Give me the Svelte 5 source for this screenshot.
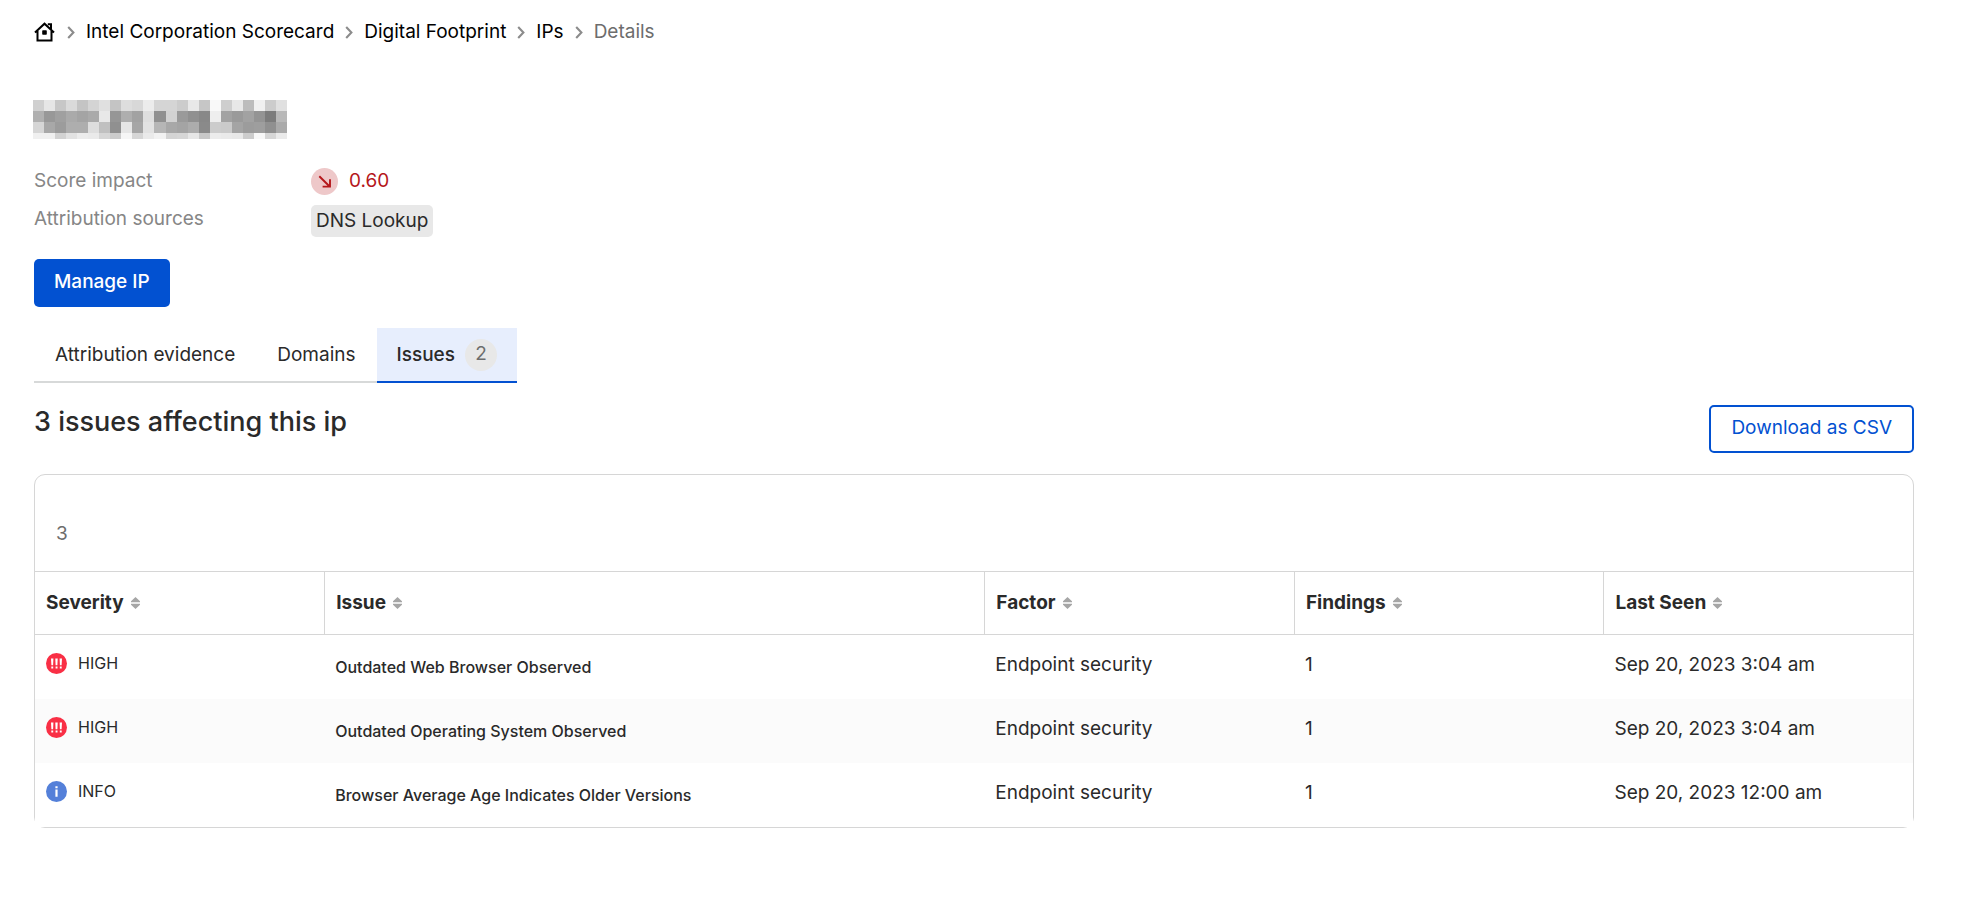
<script>
  const crumbs = ['Intel Corporation Scorecard', 'Digital Footprint', 'IPs'];

  // Grey levels of the redacted address, one row of blocks per line
  const mosaic = [
    [208, 230, 199, 218, 196, 212, 224, 196, 221, 216, 236, 213, 213, 204, 232, 198, 249, 206, 232, 188, 240, 204, 224],
    [176, 152, 160, 170, 164, 170, 232, 150, 174, 162, 222, 144, 210, 154, 144, 136, 238, 162, 154, 162, 148, 124, 184],
    [214, 168, 156, 174, 174, 222, 192, 144, 230, 166, 226, 182, 168, 164, 172, 138, 204, 202, 164, 156, 158, 144, 170],
    [240, 240, 210, 226, 236, 234, 214, 204, 246, 214, 234, 242, 212, 214, 230, 200, 236, 234, 232, 204, 248, 214, 234]
  ];

  const columns = [
    { key: 'severity', label: 'Severity' },
    { key: 'issue', label: 'Issue' },
    { key: 'factor', label: 'Factor' },
    { key: 'findings', label: 'Findings' },
    { key: 'seen', label: 'Last Seen' }
  ];

  const rows = [
    { severity: 'HIGH', issue: 'Outdated Web Browser Observed', factor: 'Endpoint security', findings: 1, seen: 'Sep 20, 2023 3:04 am' },
    { severity: 'HIGH', issue: 'Outdated Operating System Observed', factor: 'Endpoint security', findings: 1, seen: 'Sep 20, 2023 3:04 am' },
    { severity: 'INFO', issue: 'Browser Average Age Indicates Older Versions', factor: 'Endpoint security', findings: 1, seen: 'Sep 20, 2023 12:00 am' }
  ];
</script>

{#snippet chevron()}
  <svg class="chevron" viewBox="0 0 8 13" width="8" height="13" aria-hidden="true">
    <path d="M1.2 1 6.4 6.5 1.2 12" fill="none" stroke="#8c8c8c" stroke-width="2.1" />
  </svg>
{/snippet}

<main>
  <nav class="crumbs" aria-label="Breadcrumb">
    <a href="#home" aria-label="Home">
      <svg class="home" viewBox="0 0 22 20" width="22" height="20" aria-hidden="true">
        <path d="M1 10.6 10.5 1.7l9.5 8.9M3.5 9V18.6H17.5V9M13.8 2.2H17V7.4" fill="none" stroke="#000" stroke-width="2" />
        <rect x="8.2" y="8.2" width="4.6" height="4.6" rx="0.8" />
      </svg>
    </a>
    {#each crumbs as crumb}
      {@render chevron()}
      <a href="#crumb">{crumb}</a>
    {/each}
    {@render chevron()}
    <span class="current">Details</span>
  </nav>

  <svg class="mosaic" viewBox="0 0 23 39" width="254" height="39" preserveAspectRatio="none" shape-rendering="crispEdges" aria-hidden="true">
    {#each mosaic as line, y}
      {#each line as level, x}
        <rect {x} y={y * 11} width="1" height={y === 3 ? 6 : 11} fill="rgb({level},{level},{level})" />
      {/each}
    {/each}
  </svg>

  <dl class="facts">
    <dt>Score impact</dt>
    <dd class="impact">
      <svg viewBox="0 0 27 27" width="27" height="27" aria-hidden="true">
        <circle cx="13.5" cy="13.5" r="13.5" fill="#eec8c9" />
        <path d="M8.3 8.2 18.4 18.2M19 11.2V18.6H11.6" fill="none" stroke="#b5171b" stroke-width="1.9" />
      </svg>
      0.60
    </dd>
    <dt>Attribution sources</dt>
    <dd><span class="tag">DNS Lookup</span></dd>
  </dl>

  <button class="button primary" type="button">Manage IP</button>

  <div class="tabs" role="tablist">
    <button type="button" role="tab" aria-selected="false">Attribution evidence</button>
    <button type="button" role="tab" aria-selected="false">Domains</button>
    <button type="button" role="tab" aria-selected="true" class="active">Issues <span class="count">2</span></button>
  </div>

  <div class="heading">
    <h2>3 issues affecting this ip</h2>
    <button class="button outline" type="button">Download as CSV</button>
  </div>

  <section class="card">
    <div class="total">3</div>
    <table>
      <colgroup>
        {#each columns as column}<col class={column.key} />{/each}
      </colgroup>
      <thead>
        <tr>
          {#each columns as column}
            <th scope="col">
              <button type="button">
                {column.label}
                <svg viewBox="0 0 9 12" width="9" height="12" aria-hidden="true">
                  <path d="M4.5 0 9 4.2V5.2H0V4.2zM0 6.8H9V7.8L4.5 12 0 7.8z" fill="#a6a6a6" />
                </svg>
              </button>
            </th>
          {/each}
        </tr>
      </thead>
      <tbody>
        {#each rows as row}
          <tr>
            <td>
              <span class="level">
                <svg viewBox="0 0 21 21" width="21" height="21" aria-hidden="true">
                  {#if row.severity === 'HIGH'}
                    <circle cx="10.5" cy="10.5" r="10.5" fill="#f92f45" />
                    <path d="M5 5.6H7.4L7.1 12.2H5.4zM9.3 5.6H11.7L11.4 12.2H9.6zM13.6 5.6H16L15.6 12.2H13.9zM5.3 13.4H7.2V15.4H5.3zM9.6 13.4H11.5V15.4H9.6zM13.8 13.4H15.7V15.4H13.8z" fill="#fff" />
                  {:else}
                    <circle cx="10.5" cy="10.5" r="10.5" fill="#5480d9" />
                    <path d="M9.4 5.2H11.6V7.2H9.4zM9.4 8.6H11.6V15.8H9.4z" fill="#fff" />
                  {/if}
                </svg>
                {row.severity}
              </span>
            </td>
            <td><span class="issue-name">{row.issue}</span></td>
            <td>{row.factor}</td>
            <td>{row.findings}</td>
            <td>{row.seen}</td>
          </tr>
        {/each}
      </tbody>
    </table>
  </section>
</main>

<style>
  :global(body) {
    margin: 0;
    background: #fff;
  }
  main {
    padding: 16px 72px 32px 34px;
    color: #2a2a2a;
    font-family: Inter, sans-serif;
    font-size: 19px;
    line-height: 32px;
  }
  button {
    margin: 0;
    border: 0;
    background: none;
    color: inherit;
    font: inherit;
    cursor: pointer;
  }
  svg {
    display: block;
    flex: none;
  }
  .crumbs {
    display: flex;
    align-items: center;
    gap: 11px;
    height: 32px;
  }
  .crumbs a {
    color: #000;
    text-decoration: none;
  }
  .current {
    color: #6d6d6d;
  }
  .mosaic {
    margin: 52px 0 0 -1px;
  }
  .facts {
    display: grid;
    grid-template-columns: 277px auto;
    row-gap: 6px;
    justify-content: start;
    margin: 26px 0 22px;
  }
  dt {
    color: #868686;
  }
  dd {
    margin: 0;
  }
  .impact {
    display: flex;
    align-items: center;
    gap: 11px;
    color: #b5171b;
  }
  .tag {
    display: block;
    margin-top: 2px;
    padding: 0 5px;
    border-radius: 5px;
    background: #e8e8e8;
  }
  .button {
    box-sizing: border-box;
    height: 48px;
    padding: 0 20px 3px;
    border-radius: 5px;
    font-weight: 500;
  }
  .primary {
    display: block;
    background: #0251d1;
    color: #fff;
  }
  .outline {
    border: 2px solid #0251d1;
    color: #0251d1;
    font-weight: 400;
  }
  .tabs {
    display: flex;
    width: fit-content;
    margin-top: 21px;
  }
  .tabs button {
    box-sizing: border-box;
    height: 55px;
    padding: 0 21px;
    border-bottom: 2px solid #d7d9d9;
  }
  .tabs .active {
    display: flex;
    align-items: center;
    gap: 10px;
    padding: 0 20px;
    border-color: #0251d1;
    background: #e7eefd;
    font-weight: 500;
    line-height: 30px;
  }
  .count {
    width: 32px;
    height: 32px;
    border-radius: 16px;
    background: #e8e8e8;
    color: #6d6d6d;
    font-weight: 400;
    text-align: center;
  }
  .heading {
    display: flex;
    justify-content: space-between;
    align-items: flex-start;
    margin: 22px 0 21px;
  }
  h2 {
    margin: 0;
    font-size: 27px;
    font-weight: 500;
    line-height: 34px;
  }
  .card {
    border: 1px solid #d6d6d6;
    border-radius: 11px;
  }
  .total {
    padding: 43px 21px 21px;
    color: #6d6d6d;
  }
  table {
    width: 100%;
    table-layout: fixed;
    border-collapse: separate;
    border-spacing: 0;
  }
  .severity {
    width: 15.4%;
  }
  .issue {
    width: 35.15%;
  }
  th {
    box-sizing: border-box;
    height: 64px;
    padding: 0 11px;
    border: solid #d6d6d6;
    border-width: 1px 0 1px 1px;
    text-align: left;
  }
  th:first-child {
    border-left: 0;
  }
  th button {
    display: flex;
    align-items: center;
    gap: 7px;
    padding: 0;
    font-weight: 700;
  }
  td {
    box-sizing: border-box;
    height: 64px;
    padding: 14px 11px 16px;
    vertical-align: top;
  }
  tbody tr {
    background: #fff;
  }
  tbody tr:nth-child(even) {
    background: #fbfbfb;
  }
  .level {
    display: flex;
    align-items: center;
    gap: 11px;
    font-size: 16px;
    line-height: 28px;
  }
  .issue-name {
    display: block;
    padding-top: 2px;
    font-size: 16px;
    font-weight: 500;
  }
</style>
